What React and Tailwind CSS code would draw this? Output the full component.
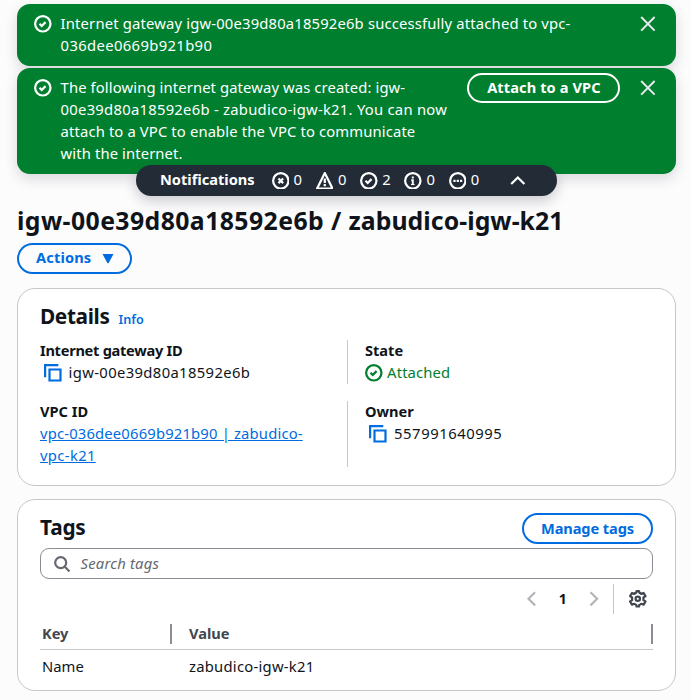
import React from "react";

const stroke = { fill: "none", stroke: "currentColor", strokeWidth: 2 };

function Icon({ children, className = "" }) {
  return (
    <svg viewBox="0 0 16 16" className={`size-[17.6px] shrink-0 ${className}`} {...stroke}>
      {children}
    </svg>
  );
}

const CheckIcon = ({ className }) => (
  <Icon className={className}>
    <circle cx="8" cy="8" r="7" />
    <path d="m5 8 2 2 3.521-3.521" />
  </Icon>
);

const CloseIcon = () => (
  <Icon className="text-[#ebebf0]">
    <path d="m2 1.8 12.2 12.4M14.2 1.8 2 14.2" strokeWidth="1.7" />
  </Icon>
);

const ErrorIcon = () => (
  <Icon>
    <circle cx="8" cy="8" r="7" />
    <path d="m10.1 5.9-4.2 4.2M10.1 10.1 5.9 5.9" />
  </Icon>
);

const WarningIcon = () => (
  <Icon>
    <path d="m8 1 7 14H1L8 1Z" strokeLinejoin="round" />
    <path d="M7.99 12H8v.01h-.01V12ZM8 6v4" />
  </Icon>
);

const InfoIcon = () => (
  <Icon>
    <circle cx="8" cy="8" r="7" />
    <path d="M8 11.5V7.6H6.6M8 6V4.2" strokeWidth="1.8" />
    <path d="M6.4 11.4h3.2" strokeWidth="1" />
  </Icon>
);

const ProgressIcon = () => (
  <Icon>
    <circle cx="8" cy="8" r="7" />
    <path d="M4 8h2M7 8h2M10 8h2" />
  </Icon>
);

const CopyIcon = () => (
  <Icon className="text-[#006ce0]">
    <path d="M15 5H5v10h10V5Z" />
    <path d="M13 1H1v11" />
  </Icon>
);

const GearIcon = () => (
  <Icon className="text-[#424650]">
    <path
      d="M13.2 8c0-.4-.04-.79-.13-1.15L15 5.6 13.3 2.7l-2.15.8c-.58-.5-1.15-.88-1.8-1.12L9.1 1H6.9l-.25 1.38c-.65.24-1.3.62-1.86 1.12L2.7 2.7 1 5.6l1.9 1.25a5.3 5.3 0 0 0 0 2.3L1 10.4l1.7 2.9 2.1-.8c.56.5 1.2.88 1.85 1.12L6.9 15h2.2l.25-1.38c.65-.24 1.22-.62 1.8-1.12l2.15.8 1.7-2.9-1.93-1.25c.09-.36.13-.75.13-1.15Z"
      strokeLinejoin="round"
    />
    <circle cx="8" cy="8" r="2" />
  </Icon>
);

function Flash({ children, action }) {
  return (
    <div className="flex rounded-[13px] bg-[#00802f] py-[9px] pl-[17px] pr-[19px] text-white shadow-[0_5px_14px_rgba(0,7,22,0.14)]">
      <div className="flex h-[22px] items-center">
        <CheckIcon />
      </div>
      <p className="-mt-px mb-px ml-[9px] flex-1 whitespace-nowrap">{children}</p>
      {action && (
        <button className="-mt-1 h-[30px] w-[153px] shrink-0 whitespace-nowrap rounded-full border-2 border-white pb-[2px] text-[14.6px] font-bold tracking-[0.1px]">
          {action}
        </button>
      )}
      <div className="ml-[19px] flex h-[22px] items-center">
        <CloseIcon />
      </div>
    </div>
  );
}

const counts = [
  [ErrorIcon, 0],
  [WarningIcon, 0],
  [CheckIcon, 2],
  [InfoIcon, 0],
  [ProgressIcon, 0],
];

function Field({ label, children, divided, tight }) {
  return (
    <div className={divided ? "border-l border-[#c6c6cd] pl-[17px]" : ""}>
      <div className={`-mt-px mb-px text-[14.6px] font-bold ${tight ? "tracking-[-0.27px]" : ""}`}>
        {label}
      </div>
      <div>{children}</div>
    </div>
  );
}

export default function App() {
  return (
    <main className="flex h-[700px] w-[691px] flex-col overflow-hidden bg-[#fcfcfd] pl-[17px] pr-[15px] pt-1 font-['Noto_Sans',sans-serif] text-[14.8px] leading-[22px] text-[#0f141a]">
      <section className="flex flex-col gap-[2px]">
        <Flash>
          <span className="tracking-[0.17px]">
            Internet gateway igw-00e39d80a18592e6b successfully attached to vpc-
          </span>
          <br />
          <span className="tracking-[0.36px]">036dee0669b921b90</span>
        </Flash>
        <Flash action="Attach to a VPC">
          <span className="tracking-[0.11px]">The following internet gateway was created: igw-</span>
          <br />
          <span className="tracking-[0.26px]">00e39d80a18592e6b - zabudico-igw-k21. You can now</span>
          <br />
          <span className="tracking-[0.13px]">attach to a VPC to enable the VPC to communicate</span>
          <br />
          <span className="tracking-[0.11px]">with the internet.</span>
        </Flash>
      </section>

      <div className="relative -mt-[9px] flex h-[31px] w-[421px] shrink-0 items-center self-center rounded-full bg-[#232b37] pl-6 text-white shadow-[0_5px_14px_rgba(0,7,22,0.2)]">
        <span className="w-[111.5px] pb-[3px] text-[14.6px] font-bold">Notifications</span>
        {counts.map(([Glyph, n], i) => (
          <span key={i} className="flex w-[44.3px] items-center gap-[4.5px]">
            <Glyph />
            <span className="pb-[3px]">{n}</span>
          </span>
        ))}
        <Icon className="ml-[16px]">
          <path d="m2 11 6-6 6 6" />
        </Icon>
      </div>

      <h1 className="mt-[8px] h-[33px] whitespace-nowrap text-[24.8px] font-bold leading-[33px] tracking-[0.42px]">
        igw-00e39d80a18592e6b / <span className="tracking-[0.05px]">zabudico-igw-k21</span>
      </h1>
      <button className="mt-[6px] flex h-[31px] w-[115px] shrink-0 items-center rounded-full border-2 border-[#006ce0] pl-[17px] text-[14.6px] font-bold tracking-[0.15px] text-[#006ce0]">
        <span className="pb-[3px]">Actions</span>
        <svg viewBox="0 0 12 10" className="ml-[11px] mt-[1px] h-[10px] w-3 fill-current">
          <path d="M.5 0h11L6.8 8.8q-.8 1-1.6 0Z" />
        </svg>
      </button>

      <section className="mt-[14px] h-[198px] shrink-0 rounded-[18px] border border-[#c6c6cd] bg-white px-[22px] pt-[14px]">
        <div className="flex h-[27px] items-baseline leading-[27px]">
          <h2 className="text-[20.8px] font-bold tracking-[-0.35px]">Details</h2>
          <a className="ml-[9px] text-[12.6px] font-semibold text-[#006ce0]">Info</a>
        </div>
        <div className="mt-[10px] grid grid-cols-[307px_1fr] gap-y-[17px]">
          <Field label="Internet gateway ID" tight>
            <span className="flex items-center gap-[7px] pl-1">
              <CopyIcon />
              <span className="-mt-px mb-px tracking-[0.36px]">igw-00e39d80a18592e6b</span>
            </span>
          </Field>
          <Field label="State" divided>
            <span className="flex items-center gap-[4.5px] text-[#00802f]">
              <CheckIcon />
              <span className="-mt-px mb-px tracking-[0.13px]">Attached</span>
            </span>
          </Field>
          <Field label="VPC ID">
            <a className="-mt-px mb-px block tracking-[0.17px] text-[#006ce0] underline">
              vpc-036dee0669b921b90 | zabudico-
              <br />
              <span className="tracking-[0.35px]">vpc-k21</span>
            </a>
          </Field>
          <Field label="Owner" divided>
            <span className="flex items-center gap-[7.5px] pl-1">
              <CopyIcon />
              <span className="-mt-px mb-px tracking-[0.55px]">557991640995</span>
            </span>
          </Field>
        </div>
      </section>

      <section className="mt-[13px] h-[192px] shrink-0 rounded-[18px] border border-[#c6c6cd] bg-white px-[22px] pt-[13px]">
        <div className="flex h-[31px] items-center justify-between">
          <h2 className="-mt-[3px] text-[20.8px] font-bold leading-[27px] tracking-[-0.2px]">Tags</h2>
          <button className="h-[31px] w-[131px] whitespace-nowrap rounded-full border-2 border-[#006ce0] pb-[2px] text-[14.6px] font-bold tracking-[-0.1px] text-[#006ce0]">
            Manage tags
          </button>
        </div>
        <div className="mt-1 flex h-[31px] items-center gap-[10px] rounded-[9px] border border-[#8c8c94] pl-3 italic tracking-[0.2px] text-[#656871]">
          <Icon>
            <circle cx="7" cy="7" r="5" />
            <path d="m15 15-4.5-4.5" />
          </Icon>
          <span className="pb-px">Search tags</span>
        </div>
        <div className="mt-[5px] flex h-[30px] items-center justify-end">
          <Icon className="text-[#b4b4bb]">
            <path d="M11 2 5 8l6 6" />
          </Icon>
          <span className="w-[44px] text-center text-[14px] font-bold">1</span>
          <Icon className="text-[#b4b4bb]">
            <path d="m5 2 6 6-6 6" />
          </Icon>
          <div className="ml-[11px] h-[30px] w-px bg-[#c6c6cd]" />
          <div className="ml-[15px] mr-[6px]">
            <GearIcon />
          </div>
        </div>
        <div className="mt-[5px] flex h-[31px] items-center border-b border-[#c6c6cd] text-[14.6px] font-bold text-[#424650]">
          <span className="w-[130px] pb-[2px] pl-[2px]">Key</span>
          <span className="h-5 w-[2px] bg-[#8c8c94]" />
          <span className="flex-1 pb-[2px] pl-[17px]">Value</span>
          <span className="h-5 w-[2px] bg-[#8c8c94]" />
        </div>
        <div className="flex h-[34px] items-center pb-[3px]">
          <span className="w-[149px] pl-[2px]">Name</span>
          <span className="tracking-[0.25px]">zabudico-igw-k21</span>
        </div>
      </section>
    </main>
  );
}
